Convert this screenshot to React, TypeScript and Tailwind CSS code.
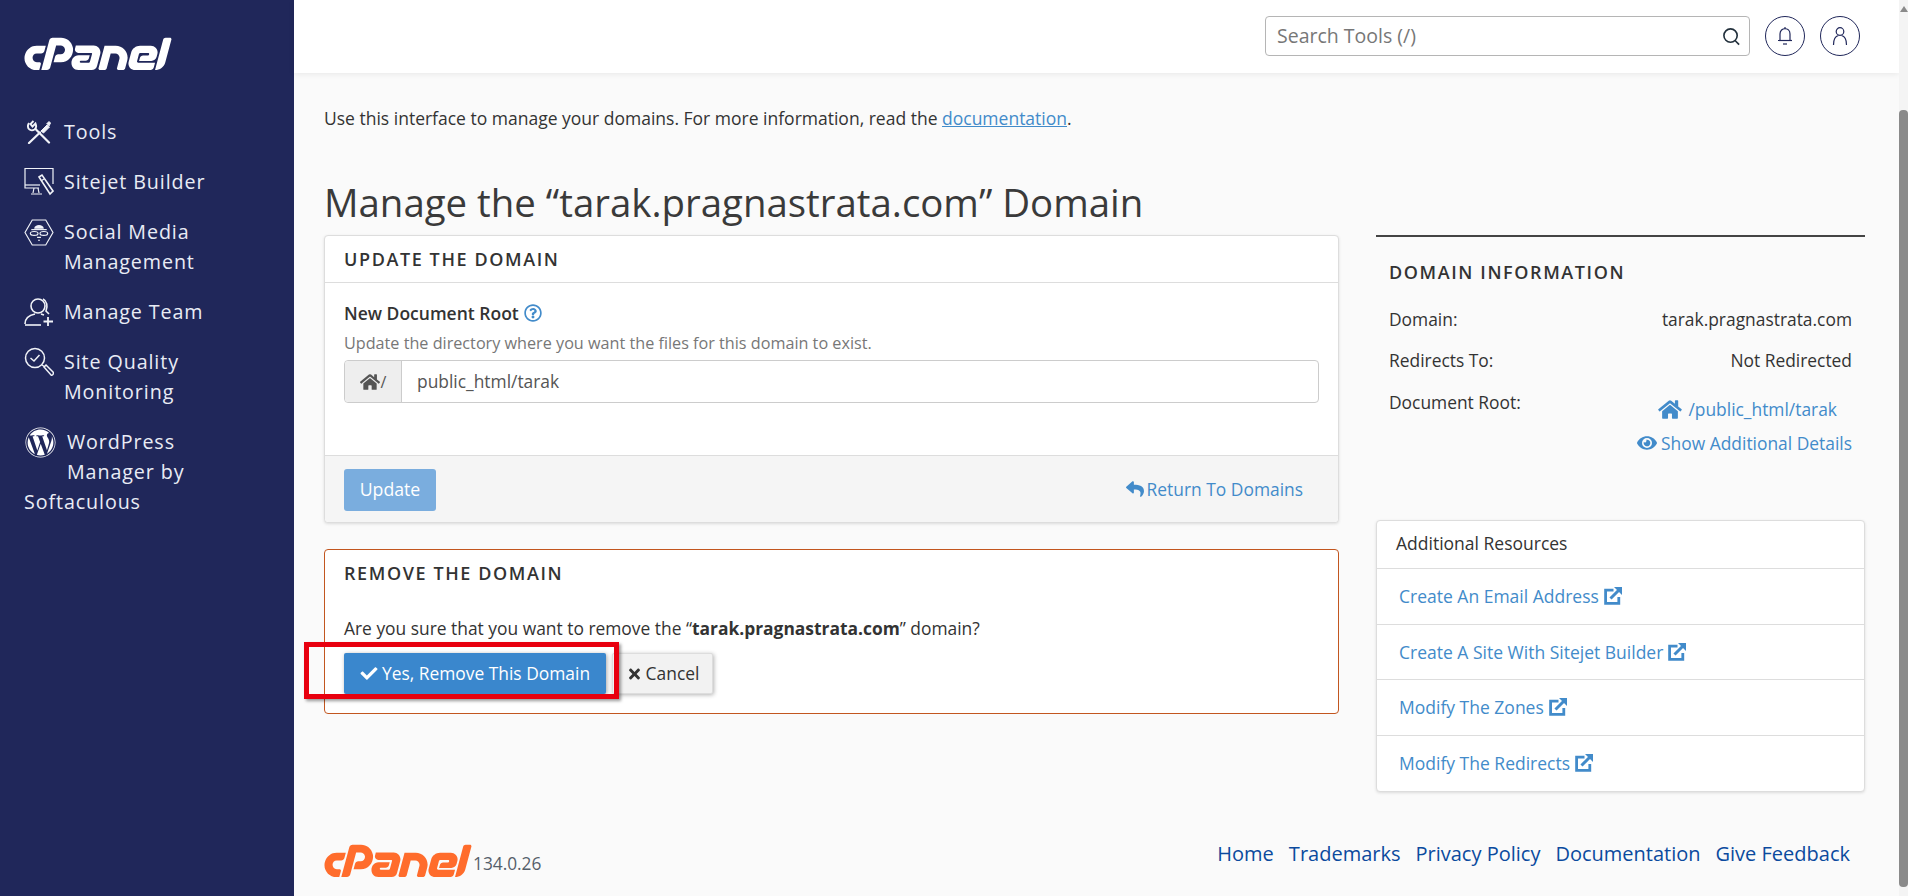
import { FaCpanel, FaWordpress, FaHome, FaCheck, FaTimes, FaReply, FaEye, FaRegQuestionCircle } from "react-icons/fa";

const font = "font-['Open_Sans',sans-serif]";

function ToolsIcon() {
  return (
    <svg viewBox="0 0 24 24" className="ml-[3px] h-[24px] w-[24px] shrink-0" fill="none" stroke="#f1f3f8" strokeWidth="2.2">
      <path d="M2 23 L13 12.5" strokeLinecap="round" />
      <path d="M14 11 L20 5 L22.5 7 L16.5 13 Z M19.5 4 L22 1.5 L23.5 3 L22 6" fill="#f1f3f8" strokeWidth="1" />
      <path d="M9 9.5 L22 22.5" strokeLinecap="round" />
      <path d="M6.5 1 L3.5 4 L5.5 6.5 L8.5 3.5 C9.5 6 9 8.5 7.5 9.5 C5 11 2.5 10 1.5 8.5 C0.5 6.5 1 4.5 2 3" strokeWidth="1.9" />
    </svg>
  );
}

function SitejetIcon() {
  return (
    <svg viewBox="0 0 30 30" className="h-[30px] w-[30px] shrink-0" fill="none" stroke="#f1f3f8" strokeWidth="1.2">
      <path d="M15 21 H1 V1.5 H29 V17" />
      <path d="M1 18 H16" />
      <path d="M10 21 L9 26 M14 21 L15 26 M7 27 H18" />
      <path d="M15 10 L18 8 L29 24 L26 27 Z" strokeWidth="1.6" />
      <path d="M17 14 L20 12" />
    </svg>
  );
}

function SocialIcon() {
  return (
    <svg viewBox="0 0 30 28" className="h-[27px] w-[30px] shrink-0" fill="none" stroke="#f1f3f8" strokeWidth="1.2">
      <path d="M8 1 H22 L29.5 14 L22 27 H8 L0.5 14 Z" />
      <path d="M10 10 C10 5 20 5 20 10 Z" fill="#f1f3f8" stroke="none" />
      <path d="M7 11 H23" />
      <ellipse cx="10" cy="15" rx="4" ry="2" />
      <ellipse cx="20" cy="15" rx="4" ry="2" />
      <path d="M13 19 H17 M14 22 H16" />
    </svg>
  );
}

function TeamIcon() {
  return (
    <svg viewBox="0 0 30 30" className="h-[30px] w-[30px] shrink-0" fill="none" stroke="#f1f3f8" strokeWidth="1.6">
      <circle cx="14" cy="9" r="7" />
      <path d="M19 2 C23 4 24 9 22 14 L25 17" />
      <path d="M1 27 C1 21 6 18 11 17 M17 17 L20 18" />
      <path d="M1 28 H17" />
      <path d="M24 20 V29 M19.5 24.5 H29" strokeWidth="1.8" />
    </svg>
  );
}

function QualityIcon() {
  return (
    <svg viewBox="0 0 30 30" className="h-[30px] w-[30px] shrink-0" fill="none" stroke="#f1f3f8" strokeWidth="1.5">
      <circle cx="11" cy="11" r="9.5" />
      <path d="M6.5 11 L10 14 L15.5 8" />
      <path d="M18 18 L21 20" />
      <path d="M20 20 L27 28 C29 29 30 26 29 25 L22 18 Z" />
    </svg>
  );
}

function ExternalIcon() {
  return (
    <svg viewBox="0 0 18 18" className="ml-[5px] inline-block h-[18px] w-[18px] align-[-2px]" fill="none" stroke="#428bca">
      <path d="M9.5 3.2 H1.6 V16.4 H14.8 V10" strokeWidth="2.8" />
      <path d="M6.5 11.5 L15 3" strokeWidth="3" />
      <path d="M10 0 H18 V8 Z" fill="#428bca" stroke="none" />
    </svg>
  );
}

const resources = [
  "Create An Email Address",
  "Create A Site With Sitejet Builder",
  "Modify The Zones",
  "Modify The Redirects",
];

function NavItem({ icon, children, className }: { icon: React.ReactNode; children: React.ReactNode; className?: string }) {
  return (
    <div className={"flex items-start " + (className ?? "")}>
      <div className="flex h-[30px] w-[40px] shrink-0 items-center">{icon}</div>
      <div className="whitespace-nowrap">{children}</div>
    </div>
  );
}

export default function App() {
  return (
    <div className={font + " flex h-[896px] w-[1908px] overflow-hidden bg-[#fafafa] text-[#333]"}>
      <aside className="flex w-[294px] shrink-0 flex-col bg-[#20275a] pl-[24px] text-[19.7px] leading-[30px] tracking-[0.9px] text-[#e9ecf5]">
        <FaCpanel viewBox="0 176 640 148" className="mt-[37px] h-[34px] w-[148px] text-white" />
        <nav className="mt-[46px] flex flex-col">
          <NavItem icon={<ToolsIcon />}>Tools</NavItem>
          <NavItem icon={<SitejetIcon />} className="mt-[20px]">Sitejet Builder</NavItem>
          <NavItem icon={<SocialIcon />} className="mt-[20px]">Social Media<br />Management</NavItem>
          <NavItem icon={<TeamIcon />} className="mt-[20px]">Manage Team</NavItem>
          <NavItem icon={<QualityIcon />} className="mt-[20px]">Site Quality<br />Monitoring</NavItem>
          <div className="mt-[20px] whitespace-nowrap">
            <div className="flex">
              <div className="flex h-[30px] w-[43px] shrink-0 items-center"><FaWordpress className="ml-[1px] h-[31px] w-[31px] text-white" /></div>
              <div>WordPress<br />Manager by</div>
            </div>
            Softaculous
          </div>
        </nav>
      </aside>

      <div className="flex min-w-0 flex-1 flex-col">
        <header className="flex h-[73px] shrink-0 items-start justify-end gap-[15px] bg-white pr-[39px] pt-[16px] shadow-[0_1px_6px_rgba(0,0,0,0.08)]">
          <div className="flex h-[40px] w-[485px] items-center justify-between rounded-[4px] border border-[#b5b5b5] pl-[11px] pr-[8px] text-[19.5px] text-[#777]">
            <span>Search Tools (/)</span>
            <svg viewBox="0 0 20 20" className="h-[19px] w-[19px]" fill="none" stroke="#22303c" strokeWidth="1.7">
              <circle cx="9" cy="9" r="7" />
              <path d="M13.5 14 L18 18.5" />
            </svg>
          </div>
          <div className="flex h-[40px] w-[40px] items-center justify-center rounded-full border border-[#20275a]">
            <svg viewBox="0 0 20 20" className="h-[20px] w-[20px]" fill="none" stroke="#20275a" strokeWidth="1.2">
              <path d="M5 14.5 V8 C5 1 15 1 15 8 V14.5" />
              <path d="M3 14.5 H17" />
              <path d="M8 18 H12" />
              <path d="M10 1 V3" />
            </svg>
          </div>
          <div className="flex h-[40px] w-[40px] items-center justify-center rounded-full border border-[#20275a]">
            <svg viewBox="0 0 20 20" className="h-[20px] w-[20px]" fill="none" stroke="#20275a" strokeWidth="1.2">
              <circle cx="10" cy="5.5" r="3.8" />
              <path d="M3.5 19 C3.5 13 6 10 8.5 9.5 M16.5 19 C16.5 13 14 10 11.5 9.5" />
            </svg>
          </div>
        </header>

        <main className="flex min-h-0 flex-1 flex-col pl-[30px] pr-[34px]">
          <p className="mt-[34px] text-[17.5px] leading-[22px]">
            Use this interface to manage your domains. For more information, read the <a className="text-[#428bca] underline">documentation</a>.
          </p>
          <h1 className="mt-[48px] text-[38.4px] leading-[50px] text-[#3a3a3a]">Manage the “tarak.pragnastrata.com” Domain</h1>

          <div className="mt-[8px] flex items-start gap-[37px]">
            <div className="w-[1015px] shrink-0">
              <section className="rounded-[4px] border border-[#ddd] bg-white shadow-[0_1px_3px_rgba(0,0,0,0.12)]">
                <h2 className="flex h-[47px] items-center border-b border-[#ddd] px-[19px] text-[18px] font-semibold tracking-[1.6px]">UPDATE THE DOMAIN</h2>
                <div className="h-[172px] px-[19px] pt-[17px]">
                  <div className="flex items-center gap-[5px] text-[17.5px] font-semibold leading-[26px]">
                    New Document Root <FaRegQuestionCircle className="h-[18px] w-[18px] text-[#428bca]" />
                  </div>
                  <p className="mt-[4px] text-[16.2px] leading-[26px] text-[#777]">Update the directory where you want the files for this domain to exist.</p>
                  <div className="mt-[4px] flex h-[43px] rounded-[4px] border border-[#ccc] bg-white">
                    <div className="flex w-[57px] items-center justify-center gap-[1px] rounded-l-[4px] border-r border-[#ccc] bg-[#eee] text-[#555]">
                      <FaHome className="h-[18px] w-[20px]" />
                      <span className="text-[16px]">/</span>
                    </div>
                    <div className="flex items-center pl-[15px] text-[17.4px] text-[#555]">public_html/tarak</div>
                  </div>
                </div>
                <div className="flex h-[67px] items-center justify-between rounded-b-[4px] border-t border-[#ddd] bg-[#f5f5f5] pl-[19px] pr-[35px] pt-[1px]">
                  <button className="h-[42px] w-[92px] rounded-[3px] bg-[#7aadde] text-[17.7px] text-white">Update</button>
                  <a className="flex items-center gap-[2px] text-[17.4px] text-[#428bca]"><FaReply className="h-[18px] w-[20px]" />Return To Domains</a>
                </div>
              </section>

              <section className="mt-[26px] h-[165px] rounded-[4px] border border-[#c2561f] bg-white px-[19px] pt-[10px]">
                <h2 className="text-[18px] font-semibold leading-[26px] tracking-[1.6px]">REMOVE THE DOMAIN</h2>
                <p className="mt-[29px] text-[17.4px] leading-[26px]">Are you sure that you want to remove the “<b>tarak.pragnastrata.com</b>” domain?</p>
                <div className="relative mt-[12px] flex gap-[6px]">
                  <button className="flex h-[41px] w-[262px] items-center justify-center gap-[4px] rounded-[2px] bg-[#3a87cd] text-[17.4px] text-white shadow-[1px_1px_4px_rgba(0,0,0,0.35)]"><FaCheck className="h-[17px] w-[18px]" />Yes, Remove This Domain</button>
                  <button className="flex h-[41px] w-[101px] items-center justify-center gap-[3px] rounded-[2px] border border-[#ddd] bg-[#f2f2f2] text-[17.4px] shadow-[1px_1px_4px_rgba(0,0,0,0.3)]"><FaTimes className="h-[16px] w-[17px]" />Cancel</button>
                  <div className="absolute left-[-40px] top-[-11px] h-[57px] w-[315px] border-[5px] border-[#e8000f] shadow-[2px_2px_3px_rgba(0,0,0,0.4)]" />
                </div>
              </section>
            </div>

            <div className="w-[489px] shrink-0">
              <section className="h-[248px] border-t-2 border-[#444] px-[13px] pt-[22px] text-[17.4px]">
                <h2 className="text-[18px] font-semibold leading-[26px] tracking-[1.6px]">DOMAIN INFORMATION</h2>
                <div className="mt-[21px] flex justify-between leading-[26px]"><span>Domain:</span><span>tarak.pragnastrata.com</span></div>
                <div className="mt-[15px] flex justify-between leading-[26px]"><span>Redirects To:</span><span>Not Redirected</span></div>
                <div className="mt-[16px] flex justify-between leading-[26px]">
                  <span>Document Root:</span>
                  <div className="flex flex-col items-end text-[#428bca]">
                    <a className="mr-[15px] mt-[7px] flex items-center gap-[5px]"><FaHome className="h-[21px] w-[26px]" />/public_html/tarak</a>
                    <a className="mt-[8px] flex items-center gap-[4px]"><FaEye className="h-[18px] w-[20px]" />Show Additional Details</a>
                  </div>
                </div>
              </section>
              <section className="mt-[37px] rounded-[4px] border border-[#ddd] bg-white text-[17.5px] shadow-[0_1px_3px_rgba(0,0,0,0.12)]">
                <div className="flex h-[48px] items-center border-b border-[#ddd] pb-[2px] pl-[19px]">Additional Resources</div>
                {resources.map((r, i) => (
                  <div key={r} className={"flex h-[55.5px] items-center pl-[22px] text-[#428bca] " + (i < resources.length - 1 ? "border-b border-[#ddd]" : "")}>
                    <a>{r}<ExternalIcon /></a>
                  </div>
                ))}
              </section>
            </div>
          </div>

          <footer className="mt-auto flex items-start justify-between pb-[18px] pr-[15px]">
            <div className="flex items-end">
              <FaCpanel viewBox="0 176 640 148" className="h-[34px] w-[148px] text-[#ff6c2c]" />
              <span className="mb-[2px] ml-[1px] text-[17.3px] leading-[24px] text-[#555f6b]">134.0.26</span>
            </div>
            <div className="mt-[-3px] flex gap-[15px] text-[20px] leading-[26px] text-[#0b4a9e]">
              <a>Home</a><a>Trademarks</a><a>Privacy Policy</a><a>Documentation</a><a>Give Feedback</a>
            </div>
          </footer>
        </main>
      </div>

      <div className="flex w-[9px] shrink-0 flex-col items-center bg-[#f4f4f4]">
        <div className="mt-[6px] h-0 w-0 border-x-[4px] border-b-[6px] border-x-transparent border-b-[#8a8a8a]" />
        <div className="mt-[98px] h-[777px] w-full rounded-[4px] bg-[#8a8a8a]" />
      </div>
    </div>
  );
}
